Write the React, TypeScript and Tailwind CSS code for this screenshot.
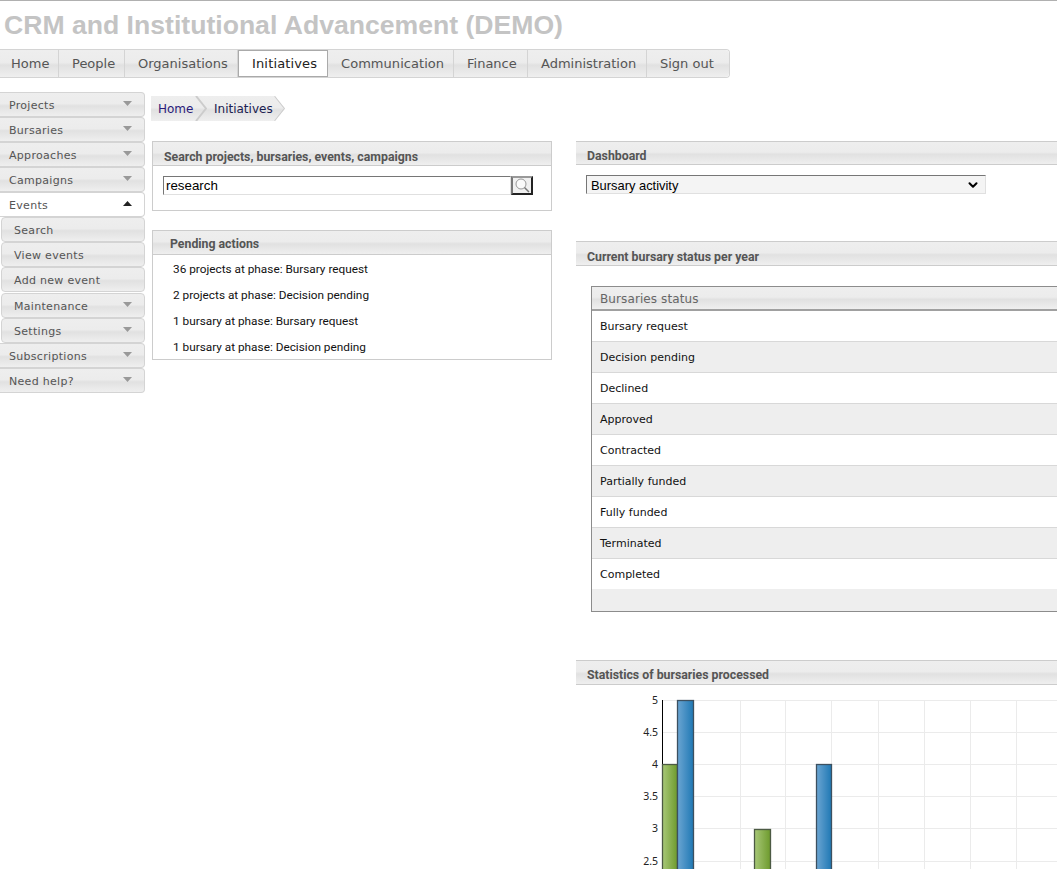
import { ChevronDown } from "lucide-react";

const gloss = "bg-[linear-gradient(to_bottom,#eeeeee_0%,#ececec_46%,#e1e1e1_56%,#efefef_100%)]";

const navItems = [
  { label: "Home", width: "w-[59px] pl-[11px]" },
  { label: "People", width: "w-[66px] pl-[13px]" },
  { label: "Organisations", width: "w-[113px] pl-[13px]" },
  { label: "Initiatives", width: "w-[90px] pl-[13px] tracking-[0.15px]" },
  { label: "Communication", width: "w-[126px] pl-[13px] tracking-[0.05px]" },
  { label: "Finance", width: "w-[74px] pl-[13px]" },
  { label: "Administration", width: "w-[119px] pl-[13px]" },
  { label: "Sign out", width: "flex-1 pl-[13px]" },
];

const statuses = [
  "Bursary request",
  "Decision pending",
  "Declined",
  "Approved",
  "Contracted",
  "Partially funded",
  "Fully funded",
  "Terminated",
  "Completed",
];

const pending = [
  "36 projects at phase: Bursary request",
  "2 projects at phase: Decision pending",
  "1 bursary at phase: Bursary request",
  "1 bursary at phase: Decision pending",
];

const Arrow = ({ up = false, dark = false }: { up?: boolean; dark?: boolean }) => (
  <svg width="9" height="5" viewBox="0 0 9 5" className="mt-[-2px]">
    <polygon points={up ? "0,5 9,5 4.5,0" : "0,0 9,0 4.5,5"} fill={dark ? "#222222" : "#999999"} />
  </svg>
);

const SideItem = ({ label, sub, arrow, active, className = "" }: { label: string; sub?: boolean; arrow?: boolean; active?: boolean; className?: string }) => (
  <div
    className={`flex h-[25px] items-center justify-between rounded-r-[4px] border border-[#d4d4d4] pr-[12px] text-[11px] tracking-[0.3px] ${
      sub ? "ml-[1px] rounded-l-[4px] pl-[12px] text-[#555555]" : "border-l-0 pl-[9px] text-[#555555]"
    } ${active ? "border-[#aaaaaa] bg-white text-[#111111]" : gloss} ${className}`}
  >
    <span className="mt-[4px]">{label}</span>
    {arrow && <Arrow up={active} dark={active} />}
  </div>
);

const PanelHeader = ({ title, className = "" }: { title: string; className?: string }) => (
  <div
    className={`flex items-center border-[#cccccc] font-['Roboto',sans-serif] text-[12.3px] font-bold text-[#555555] ${gloss} ${className}`}
  >
    {title}
  </div>
);

const Chart = () => {
  const hLines = [700, 732, 764, 796, 828, 861];
  const vLines = [740, 785, 831, 878, 924, 970, 1016];
  const labels = ["5", "4.5", "4", "3.5", "3", "2.5"];
  return (
    <svg width="481" height="184" viewBox="576 685 481 184" className="block">
      <defs>
        <linearGradient id="green" x1="0" x2="1" y1="0" y2="0">
          <stop offset="0" stopColor="#a8c878" />
          <stop offset="1" stopColor="#6d9a2c" />
        </linearGradient>
        <linearGradient id="blue" x1="0" x2="1" y1="0" y2="0">
          <stop offset="0" stopColor="#6ba5d2" />
          <stop offset="1" stopColor="#1f78b4" />
        </linearGradient>
      </defs>
      {hLines.map((y) => (
        <line key={y} x1="662" x2="1057" y1={y + 0.5} y2={y + 0.5} stroke="#ebebeb" />
      ))}
      {vLines.map((x) => (
        <line key={x} x1={x + 0.5} x2={x + 0.5} y1="700" y2="869" stroke="#ebebeb" />
      ))}
      <line x1="662.5" x2="662.5" y1="700" y2="869" stroke="#000000" />
      {labels.map((t, i) => (
        <text key={t} x="658" y={hLines[i] + 4} textAnchor="end" fontSize="10.5" fill="#222222" fontFamily="'Noto Sans', sans-serif">
          {t}
        </text>
      ))}
      <rect x="662.5" y="764.5" width="15" height="110" fill="url(#green)" stroke="#4c5a44" strokeWidth="1.3" />
      <rect x="677.5" y="700.5" width="16" height="175" fill="url(#blue)" stroke="#3c5060" strokeWidth="1.3" />
      <rect x="754.5" y="829.5" width="16" height="50" fill="url(#green)" stroke="#4c5a44" strokeWidth="1.3" />
      <rect x="816.5" y="764.5" width="15" height="110" fill="url(#blue)" stroke="#3c5060" strokeWidth="1.3" />
    </svg>
  );
};

export default function App() {
  return (
    <div className="h-[869px] w-[1057px] overflow-hidden border-t border-[#b0b0b0] bg-white font-['DejaVu_Sans',sans-serif]">
      <h1 className="pl-[4px] pt-[9px] font-['Liberation_Sans',sans-serif] text-[26.6px] font-bold leading-[30px] text-[#c4c4c4]">
        CRM and Institutional Advancement (DEMO)
      </h1>

      <nav className="mt-[9px] flex h-[29px] w-[730px] rounded-r-[4px] border border-l-0 border-[#d4d4d4]">
        {navItems.map((item, i) => (
          <div
            key={item.label}
            className={`flex h-full items-center whitespace-nowrap text-[13px] ${item.width} ${
              item.label === "Initiatives"
                ? "-my-px h-[29px] self-center border border-[#aaaaaa] bg-white text-[#222222]"
                : `text-[#555555] ${gloss} ${i < navItems.length - 1 ? "border-r border-[#d4d4d4]" : "rounded-r-[4px]"}`
            }`}
          >
            {item.label}
          </div>
        ))}
      </nav>

      <div className="mt-[14px] flex">
        <aside className="w-[145px] shrink-0">
          <SideItem label="Projects" arrow />
          <SideItem label="Bursaries" arrow />
          <SideItem label="Approaches" arrow />
          <SideItem label="Campaigns" arrow />
          <SideItem label="Events" arrow active />
          <SideItem label="Search" sub />
          <SideItem label="View events" sub />
          <SideItem label="Add new event" sub />
          <SideItem label="Maintenance" sub arrow className="mt-px" />
          <SideItem label="Settings" sub arrow />
          <SideItem label="Subscriptions" arrow />
          <SideItem label="Need help?" arrow />
        </aside>

        <main className="ml-[6px] flex-1">
          <div className="mt-[4px] flex h-[25px] text-[12px]">
            <div className={`relative flex w-[56px] items-center pl-[7px] text-[#2a1a7a] ${gloss}`}>
              Home
              <svg width="12" height="25" viewBox="0 0 12 25" className="absolute right-0 top-0">
                <polyline points="1,0 11,12.5 1,25" fill="none" stroke="#cccccc" strokeWidth="2" />
              </svg>
            </div>
            <div className={`relative flex w-[78px] items-center pl-[7px] text-[#1a2050] ${gloss} [clip-path:polygon(0_0,calc(100%-10px)_0,100%_50%,calc(100%-10px)_100%,0_100%)]`}>
              Initiatives
              <svg width="12" height="25" viewBox="0 0 12 25" className="absolute right-0 top-0">
                <polyline points="2,0 12,12.5 2,25" fill="none" stroke="#cccccc" strokeWidth="2" />
              </svg>
            </div>
          </div>

          <div className="ml-[1px] mt-[20px] flex gap-[24px]">
            <section className="w-[400px] shrink-0">
              <div className="border border-[#cccccc]">
                <PanelHeader title="Search projects, bursaries, events, campaigns" className="h-[24px] border-b pl-[11px] pt-[7px]" />
                <div className="flex px-[10px] pb-[15px] pt-[10px]">
                  <input
                    readOnly
                    value="research"
                    className="h-[19px] w-[348px] border border-[#e0e0e0] border-l-[#767676] border-t-[#767676] pl-[2px] font-['Liberation_Sans',sans-serif] text-[13.33px] text-black outline-none"
                  />
                  <button className="flex h-[19px] w-[22px] items-center justify-center border-2 border-[#222222] border-l-[#777777] border-t-[#999999] bg-[#f0f0f0]">
                    <svg width="17" height="15" viewBox="0 0 17 15">
                      <circle cx="7" cy="6" r="5" fill="#fafafa" stroke="#999999" />
                      <line x1="10.5" y1="9.5" x2="15" y2="14" stroke="#777777" strokeWidth="1.5" />
                    </svg>
                  </button>
                </div>
              </div>

              <div className="mt-[19px] border border-[#cccccc]">
                <PanelHeader title="Pending actions" className="h-[24px] border-b pl-[17px] pt-[3px]" />
                <ul className="font-['Roboto',sans-serif] text-[11.8px] text-[#111111]">
                  {pending.map((p) => (
                    <li key={p} className="flex h-[26px] items-center pl-[20px] pt-[3px]">
                      {p}
                    </li>
                  ))}
                </ul>
              </div>
            </section>

            <section className="w-[600px] shrink-0">
              <PanelHeader title="Dashboard" className="h-[24px] border-y pl-[11px] pt-[6px]" />
              <div className="relative ml-[10px] mt-[10px] w-[400px]">
                <select
                  defaultValue="Bursary activity"
                  className="block h-[19px] w-[400px] appearance-none border border-[#e0e0e0] border-l-[#767676] border-t-[#767676] bg-[#f4f4f4] pl-[4px] font-['Liberation_Sans',sans-serif] text-[12.9px] text-black"
                >
                  <option>Bursary activity</option>
                </select>
                <ChevronDown size={14} strokeWidth={3.5} className="pointer-events-none absolute right-[6px] top-[3px] text-black" />
              </div>

              <PanelHeader title="Current bursary status per year" className="mt-[47px] h-[25px] border-y pl-[11px] pt-[7px]" />

              <div className="ml-[15px] mt-[20px] border border-[#8c8c8c]">
                <div className={`flex h-[24px] items-center border-b-2 border-[#a0a0a0] pl-[8px] pt-[2px] text-[12px] tracking-[0.1px] text-[#666666] ${gloss}`}>
                  Bursaries status
                </div>
                {statuses.map((s, i) => (
                  <div
                    key={s}
                    className={`flex items-center pl-[8px] pt-[2px] text-[11px] text-[#111111] ${
                      i % 2 === 1 ? "bg-[#eeeeee]" : "bg-white"
                    } ${i === statuses.length - 1 ? "h-[30px]" : "h-[31px] border-b border-[#d8d8d8]"}`}
                  >
                    {s}
                  </div>
                ))}
                <div className="h-[22px] bg-[#eeeeee]" />
              </div>

              <PanelHeader title="Statistics of bursaries processed" className="mt-[48px] h-[25px] border-y pl-[11px] pt-[6px]" />
              <Chart />
            </section>
          </div>
        </main>
      </div>
    </div>
  );
}
